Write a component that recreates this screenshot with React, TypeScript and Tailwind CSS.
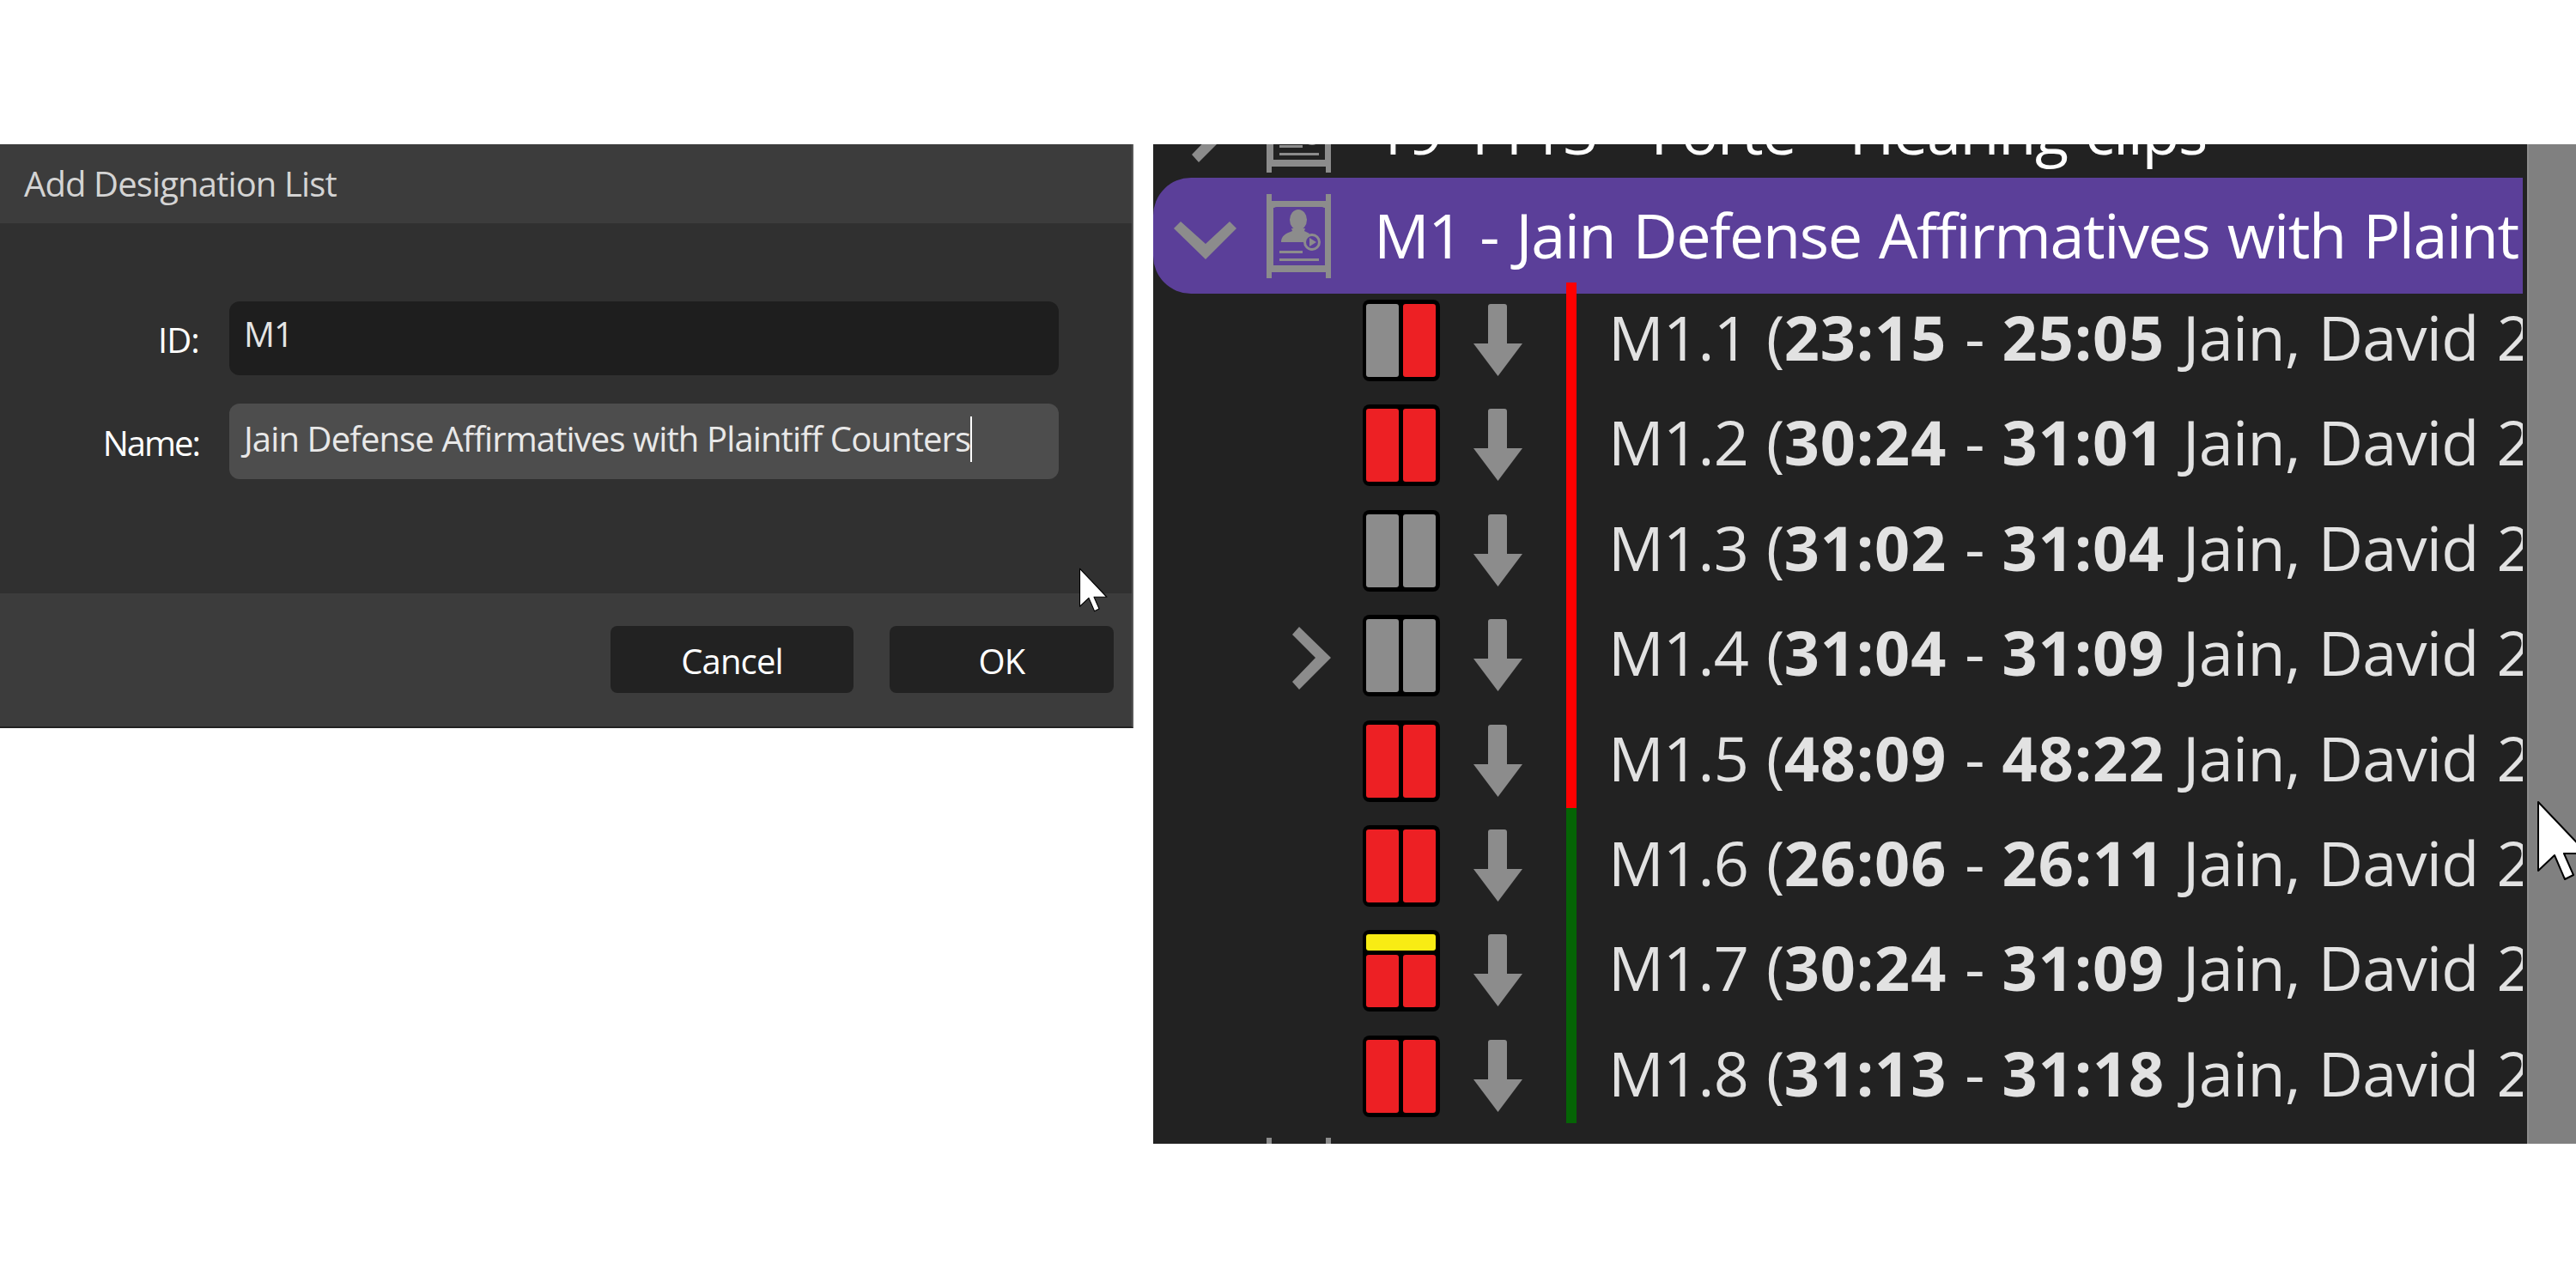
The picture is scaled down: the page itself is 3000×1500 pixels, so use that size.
const gray = '#8c8c8c'

const rows = [
  { id: 'M1.1', from: '23:15', to: '25:05', left: 'gray', right: 'red' },
  { id: 'M1.2', from: '30:24', to: '31:01', left: 'red', right: 'red' },
  { id: 'M1.3', from: '31:02', to: '31:04', left: 'gray', right: 'gray' },
  { id: 'M1.4', from: '31:04', to: '31:09', left: 'gray', right: 'gray', expandable: true },
  { id: 'M1.5', from: '48:09', to: '48:22', left: 'red', right: 'red' },
  { id: 'M1.6', from: '26:06', to: '26:11', left: 'red', right: 'red' },
  { id: 'M1.7', from: '30:24', to: '31:09', left: 'red', right: 'red', flagged: true },
  { id: 'M1.8', from: '31:13', to: '31:18', left: 'red', right: 'red' },
]

function ChevronRight() {
  return (
    <svg width="45" height="73" viewBox="0 0 45 73" className="shrink-0">
      <polygon points="8,0 45,36 8,73 0,64 27,36 0,9" fill={gray} />
    </svg>
  )
}

function ChevronDown() {
  return (
    <svg width="73" height="44" viewBox="0 0 73 44" className="shrink-0">
      <polygon points="8,0 37,26 65,0 73,8 37,44 0,8" fill={gray} />
    </svg>
  )
}

function ListIcon({ inner }: { inner: string }) {
  return (
    <svg width="75" height="98" viewBox="0 0 75 98" className="shrink-0">
      <rect x="0" y="0" width="6" height="98" fill={gray} />
      <rect x="69" y="0" width="6" height="98" fill={gray} />
      <rect x="0" y="8" width="75" height="8" fill={gray} />
      <rect x="0" y="83" width="75" height="8" fill={gray} />
      <rect x="0" y="8" width="8" height="83" fill={gray} />
      <rect x="68" y="8" width="7" height="83" fill={gray} />
      <rect x="8" y="15" width="60" height="68" rx="4" fill={inner} />
      <ellipse cx="37" cy="30" rx="10" ry="12" fill={gray} />
      <path d="M17 56c0-7 5-10 13-13l-1-3h16l-1 3c2 1 4 2 6 3l-6 10Z" fill={gray} />
      <circle cx="53" cy="56" r="8.500" fill={inner} stroke={gray} strokeWidth="3" />
      <polygon points="50,51 58,56 50,61" fill={gray} />
      <rect x="15" y="66" width="27" height="3" fill={gray} />
      <rect x="15" y="75" width="46" height="3" fill={gray} />
    </svg>
  )
}

function DownArrow() {
  return (
    <svg width="57" height="84" viewBox="0 0 57 84" className="shrink-0">
      <path d="M17 3a3 3 0 0 1 3-3h16a3 3 0 0 1 3 3v43h18L28.500 84 0 46h17Z" fill={gray} />
    </svg>
  )
}

function Bar({ color, tall }: { color: string; tall?: boolean }) {
  return (
    <div
      className={[
        'w-[38px] rounded-[3px]',
        tall ? 'h-[85px]' : 'h-[61px]',
        color === 'red' ? 'bg-[#ed2024]' : 'bg-[#8c8c8c]',
      ].join(' ')}
    />
  )
}

function StatusBadge({ left, right, flagged }: { left: string; right: string; flagged?: boolean }) {
  return (
    <div className="flex h-[95px] w-[90px] shrink-0 flex-col gap-[5px] rounded-lg bg-black pb-[5px] pl-1 pr-[5px] pt-[5px]">
      {flagged && <div className="h-5 w-full rounded-[3px] bg-[#f8ec14]" />}
      <div className="flex gap-[5px]">
        <Bar color={left} tall={!flagged} />
        <Bar color={right} tall={!flagged} />
      </div>
    </div>
  )
}

function Cursor({ className }: { className: string }) {
  return (
    <svg viewBox="0 0 60 94" className={className}>
      <polygon
        points="1,2 1,82 20,64 32,92 42,87 31,62 58,62"
        fill="#fff"
        stroke="#000"
        strokeWidth="2"
        strokeLinejoin="round"
      />
    </svg>
  )
}

function DesignationDialog() {
  return (
    <div className="relative flex h-[680px] w-[1320px] shrink-0 flex-col border-b-2 border-r-2 border-b-[#222222] border-r-[#555555] font-['Open_Sans',sans-serif] text-[40px] tracking-[-0.022em]">
      <div className="flex h-[92px] items-center bg-[#3c3c3c] pl-[28px] text-[#d4d4d4]">Add Designation List</div>

      <div className="flex-1 bg-[#303030] pt-[91px]">
        <div className="flex items-center">
          <span className="w-[232px] pt-1 text-right text-white">ID:</span>
          <div className="ml-[35px] flex h-[86px] w-[966px] items-center rounded-xl bg-[#1e1e1e] pb-2.5 pl-[17px] text-[#e4e4e4]">M1</div>
        </div>
        <div className="mt-[33px] flex items-center">
          <span className="w-[232px] pt-1 text-right text-white tracking-[-0.05em]">Name:</span>
          <div className="ml-[35px] flex h-[88px] w-[966px] items-center rounded-xl bg-[#4d4d4d] pb-1.5 pl-[17px] text-[#e8e8e8]">
            <span>Jain Defense Affirmatives with Plaintiff Counters</span>
            <span className="h-[53px] w-0.5 bg-white" />
          </div>
        </div>
      </div>

      <div className="flex h-[155px] justify-end gap-[42px] bg-[#3c3c3c] pr-[21px] pt-[38px] text-white">
        <button className="flex h-[78px] w-[283px] items-center justify-center rounded-lg bg-[#222222] pt-1">Cancel</button>
        <button className="flex h-[78px] w-[261px] items-center justify-center rounded-lg bg-[#222222] pt-1">OK</button>
      </div>

      <Cursor className="absolute left-[1257px] top-[493px] h-[52px] w-[33px]" />
    </div>
  )
}

function DesignationTree() {
  return (
    <div className="relative ml-[23px] flex h-[1164px] flex-1 overflow-hidden bg-[#222222] font-['Open_Sans',sans-serif] text-[72px] tracking-[-0.01em] text-[#e2e2e2] [word-spacing:3px]">
      <div className="w-[1595px] shrink-0 overflow-hidden">
        <div className="-mt-[71px]">
          <div className="flex h-[110px] items-center whitespace-nowrap">
            <div className="ml-[45px] w-[87px] shrink-0"><ChevronRight /></div>
            <ListIcon inner="#222222" />
            <span className="ml-[50px] tracking-[-0.02em] text-white">19-1113 - Forte - Hearing clips</span>
          </div>

          <div className="flex h-[135px] items-center whitespace-nowrap rounded-l-[44px] bg-[#5b3f99] text-white">
            <div className="ml-6 mt-[11px] w-[108px] shrink-0"><ChevronDown /></div>
            <ListIcon inner="#5b3f99" />
            <span className="ml-[50px] pb-1 tracking-[-0.02em]">M1 - Jain Defense Affirmatives with Plaintiff Counters</span>
          </div>

          <div className="relative">
            <div className="absolute -top-[13px] left-[481px] flex w-3 flex-col">
              <div className="h-[612px] bg-[#ff0000]" />
              <div className="h-[367px] bg-[#056405]" />
            </div>

            {rows.map(row => (
              <div key={row.id} className="flex h-[122.4px] items-start whitespace-nowrap pl-[162px] pt-[7px]">
                <div className="flex w-[82px] shrink-0 items-center pt-[14px]">
                  {row.expandable && <ChevronRight />}
                </div>
                <StatusBadge left={row.left} right={row.right} flagged={row.flagged} />
                <div className="ml-[39px] mt-[5px]"><DownArrow /></div>
                <div className="ml-[100px] -mt-[7px] leading-[100px]">
                  {row.id} (<b className="font-bold tracking-[0.012em]">{row.from}</b> - <b className="font-bold tracking-[0.012em]">{row.to}</b> Jain, David 2
                </div>
              </div>
            ))}

            <div className="flex pl-[132px] pt-1"><ListIcon inner="#222222" /></div>
          </div>
        </div>
      </div>

      <div className="w-[5px] shrink-0 bg-[#222222]" />
      <div className="relative flex-1 border-l-2 border-l-[#8c8c8c] bg-[#808080]" />

      <Cursor className="absolute left-[1612px] top-[764px] h-[94px] w-[60px]" />
    </div>
  )
}

export default function App() {
  return (
    <div className="flex h-[1500px] w-[3000px] items-start overflow-hidden bg-white pt-[168px]">
      <DesignationDialog />
      <DesignationTree />
    </div>
  )
}
